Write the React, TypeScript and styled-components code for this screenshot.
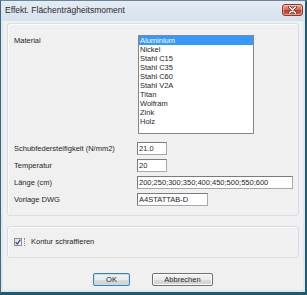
import React from "react";
import styled, { createGlobalStyle } from "styled-components";

const Global = createGlobalStyle`
  html, body { margin: 0; padding: 0; background: #1d5a6d; }
  body { font-family: "Liberation Sans", Arial, sans-serif; }
  * { box-sizing: border-box; }
`;

const Window = styled.div`
  width: 307px;
  height: 295px;
  display: flex;
  flex-direction: column;
  background: #dfe7ef;
  border-top: 1px solid #6b8797;
  border-left: 1px solid #3d6a7e;
  border-right: 2px solid #1f5b6f;
  border-bottom: 3px solid #1c5a6e;
`;

const TitleBar = styled.div`
  height: 20px;
  flex: none;
  display: flex;
  align-items: flex-start;
  justify-content: space-between;
  padding: 0 2px 0 4px;
  background: linear-gradient(#e4ebf3, #d6e1ec);
`;

const Title = styled.div`
  font-size: 8.5px;
  line-height: 11px;
  margin-top: 4px;
  color: #2a2a2a;
`;

const CloseButton = styled.div`
  width: 21px;
  height: 12px;
  margin-top: 3px;
  border: 1px solid #8d3a2c;
  border-radius: 3px;
  background: linear-gradient(#e9ad9f 0%, #d76b56 45%, #c23f28 55%, #d0644c 100%);
  display: flex;
  align-items: center;
  justify-content: center;
  box-shadow: inset 0 0 0 1px rgba(255, 220, 210, 0.5);
`;

const Client = styled.div`
  flex: 1;
  margin: 0 2px 2px 2px;
  background: #f0f0f0;
  padding: 2px 4px 4px 4px;
  display: flex;
  flex-direction: column;
`;

const GroupBox = styled.div<{ $pad: string }>`
  border: 1px solid #d5dfe5;
  border-radius: 3px;
  box-shadow: inset 1px 1px 0 #fbfbfb;
  padding: ${(p) => p.$pad};
`;

const FormGrid = styled.div`
  display: grid;
  grid-template-columns: 123px 1fr;
  row-gap: 4px;
  align-items: center;
`;

const Label = styled.div<{ $top?: boolean }>`
  font-size: 7.5px;
  line-height: 9px;
  color: #262626;
  white-space: nowrap;
  align-self: ${(p) => (p.$top ? "start" : "center")};
  margin-top: ${(p) => (p.$top ? "1px" : "0")};
`;

const ListBox = styled.div`
  width: 116px;
  height: 99px;
  margin-left: 1px;
  margin-bottom: 4px;
  border: 1px solid #828790;
  background: #fff;
  display: flex;
  flex-direction: column;
`;

const ListItem = styled.div<{ $selected?: boolean }>`
  height: 9px;
  line-height: 9px;
  font-size: 7.5px;
  padding-left: 1px;
  white-space: nowrap;
  color: ${(p) => (p.$selected ? "#fff" : "#262626")};
  background: ${(p) => (p.$selected ? "#3399ff" : "transparent")};
`;

const TextBox = styled.div<{ $w: number }>`
  width: ${(p) => p.$w}px;
  height: 13px;
  border: 1px solid #7a7a7a;
  border-right-color: #a8a8a8;
  border-bottom-color: #a8a8a8;
  background: #fff;
  font-size: 7.5px;
  line-height: 11px;
  padding-left: 1px;
  white-space: nowrap;
  overflow: hidden;
  color: #262626;
`;

const Spacer = styled.div<{ $h: number }>`
  height: ${(p) => p.$h}px;
  flex: none;
`;

const CheckRow = styled.div`
  display: flex;
  align-items: center;
  height: 9px;
`;

const CheckBox = styled.div`
  width: 8px;
  height: 8px;
  border: 1px solid #8e8f8f;
  background: linear-gradient(135deg, #dcdcdc, #f6f6f6);
  display: flex;
  align-items: center;
  justify-content: center;
`;

const FocusMark = styled.div`
  width: 1px;
  height: 8px;
  margin-left: 2px;
  border-left: 1px dotted #8a8a8a;
`;

const CheckLabel = styled.div`
  font-size: 7.5px;
  line-height: 9px;
  margin-left: 6px;
  color: #262626;
`;

const ButtonRow = styled.div`
  display: flex;
  justify-content: center;
  gap: 22px;
`;

const Button = styled.div<{ $w: number; $default?: boolean }>`
  width: ${(p) => p.$w}px;
  height: 13px;
  border: 1px solid ${(p) => (p.$default ? "#3c7fb1" : "#707070")};
  border-radius: 2px;
  background: linear-gradient(#f2f2f2 0%, #ebebeb 50%, #dddddd 51%, #cfcfcf 100%);
  box-shadow: inset 0 0 0 1px ${(p) => (p.$default ? "#b6e3f8" : "#fcfcfc")};
  font-size: 7.5px;
  line-height: 11px;
  text-align: center;
  color: #262626;
`;

const materials = [
  "Aluminium",
  "Nickel",
  "Stahl C15",
  "Stahl C35",
  "Stahl C60",
  "Stahl V2A",
  "Titan",
  "Wolfram",
  "Zink",
  "Holz",
];

export default function App() {
  return (
    <>
      <Global />
      <Window>
        <TitleBar>
          <Title>Effekt. Flächenträgheitsmoment</Title>
          <CloseButton>
            <svg width="9" height="8" viewBox="0 0 9 8">
              <path d="M1.5 1 L7.5 7 M7.5 1 L1.5 7" stroke="#6b2a20" strokeWidth="3" strokeLinecap="round" />
              <path d="M1.5 1 L7.5 7 M7.5 1 L1.5 7" stroke="#ffffff" strokeWidth="1.6" strokeLinecap="round" />
            </svg>
          </CloseButton>
        </TitleBar>
        <Client>
          <GroupBox $pad="11px 6px 9px 6px">
            <FormGrid>
              <Label $top>Material</Label>
              <ListBox>
                {materials.map((m, i) => (
                  <ListItem key={m} $selected={i === 0}>
                    {m}
                  </ListItem>
                ))}
              </ListBox>
              <Label>Schubfedersteifigkeit (N/mm2)</Label>
              <TextBox $w={30}>21.0</TextBox>
              <Label>Temperatur</Label>
              <TextBox $w={30}>20</TextBox>
              <Label>Länge (cm)</Label>
              <TextBox $w={156}>200;250;300;350;400;450;500;550;600</TextBox>
              <Label>Vorlage DWG</Label>
              <TextBox $w={71}>A4STATTAB-D</TextBox>
            </FormGrid>
          </GroupBox>
          <Spacer $h={10} />
          <GroupBox $pad="10px 6px 11px 6px">
            <CheckRow>
              <CheckBox>
                <svg width="6" height="6" viewBox="0 0 6 6">
                  <path d="M0.6 3.2 L2.3 5 L5.4 0.6" stroke="#2a4fa8" strokeWidth="1.3" fill="none" />
                </svg>
              </CheckBox>
              <FocusMark />
              <CheckLabel>Kontur schraffieren</CheckLabel>
            </CheckRow>
          </GroupBox>
          <Spacer $h={15} />
          <ButtonRow>
            <Button $w={37} $default>
              OK
            </Button>
            <Button $w={61}>Abbrechen</Button>
          </ButtonRow>
        </Client>
      </Window>
    </>
  );
}
